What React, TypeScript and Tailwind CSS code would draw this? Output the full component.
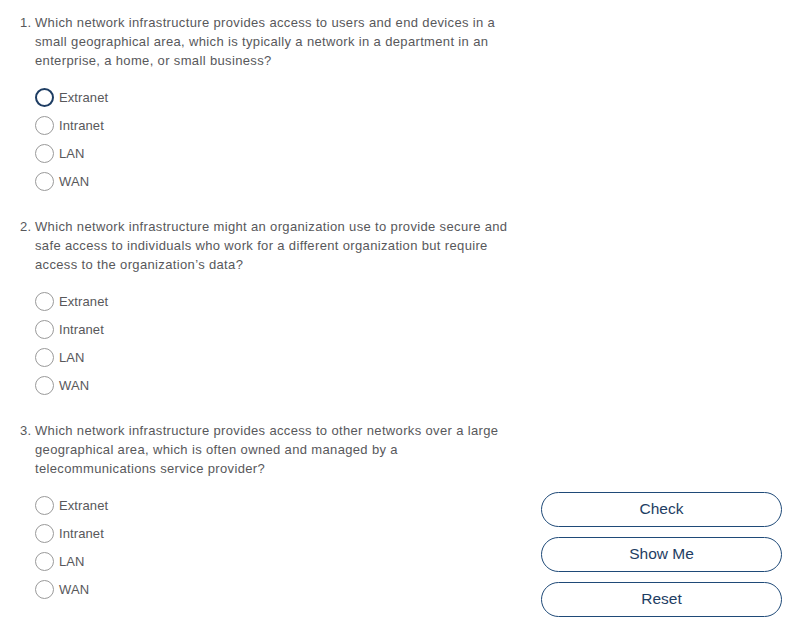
import React from "react";

const questions = [
  {
    n: "1.",
    text: "Which network infrastructure provides access to users and end devices in a small geographical area, which is typically a network in a department in an enterprise, a home, or small business?",
    focused: true,
  },
  {
    n: "2.",
    text: "Which network infrastructure might an organization use to provide secure and safe access to individuals who work for a different organization but require access to the organization\u2019s data?",
    focused: false,
  },
  {
    n: "3.",
    text: "Which network infrastructure provides access to other networks over a large geographical area, which is often owned and managed by a telecommunications service provider?",
    focused: false,
  },
];

const options = ["Extranet", "Intranet", "LAN", "WAN"];

function Radio({ focused }: { focused: boolean }) {
  return focused ? (
    <span className="box-border inline-block h-[19px] w-[19px] rounded-full border-2 border-[#1e3d63] bg-white" />
  ) : (
    <span className="box-border inline-block h-[19px] w-[19px] rounded-full border border-[#9a9a9a] bg-white" />
  );
}

export default function App() {
  return (
    <div
      className="flex h-[639px] w-[801px] bg-white text-[13px] text-[#58585b]"
      style={{ fontFamily: '"Liberation Sans", Arial, sans-serif' }}
    >
      <div className="flex w-[521px] flex-col pl-[20px] pt-[13px]">
        {questions.map((q, qi) => (
          <div key={qi} className={qi < 2 ? "mb-[22px]" : ""}>
            <div className="flex leading-[19px] tracking-[0.35px]">
              <span className="w-[15px] shrink-0">{q.n}</span>
              <p className="w-[480px]">{q.text}</p>
            </div>
            <div className="mt-[13px] flex flex-col pl-[15px]">
              {options.map((o, oi) => (
                <div key={o} className="flex h-[28px] items-center">
                  <Radio focused={q.focused && oi === 0} />
                  <span className="ml-[5px] leading-[19px] tracking-[0.1px]">{o}</span>
                </div>
              ))}
            </div>
          </div>
        ))}
      </div>
      <div className="flex flex-1 flex-col justify-end gap-[10px] pb-[22px] pl-[20px] pr-[19px]">
        {["Check", "Show Me", "Reset"].map((b) => (
          <button
            key={b}
            className="box-border h-[35px] w-[241px] rounded-full border border-[#1f4a78] bg-white pb-[2px] text-[15.5px] text-[#1e3d63]"
          >
            {b}
          </button>
        ))}
      </div>
    </div>
  );
}
